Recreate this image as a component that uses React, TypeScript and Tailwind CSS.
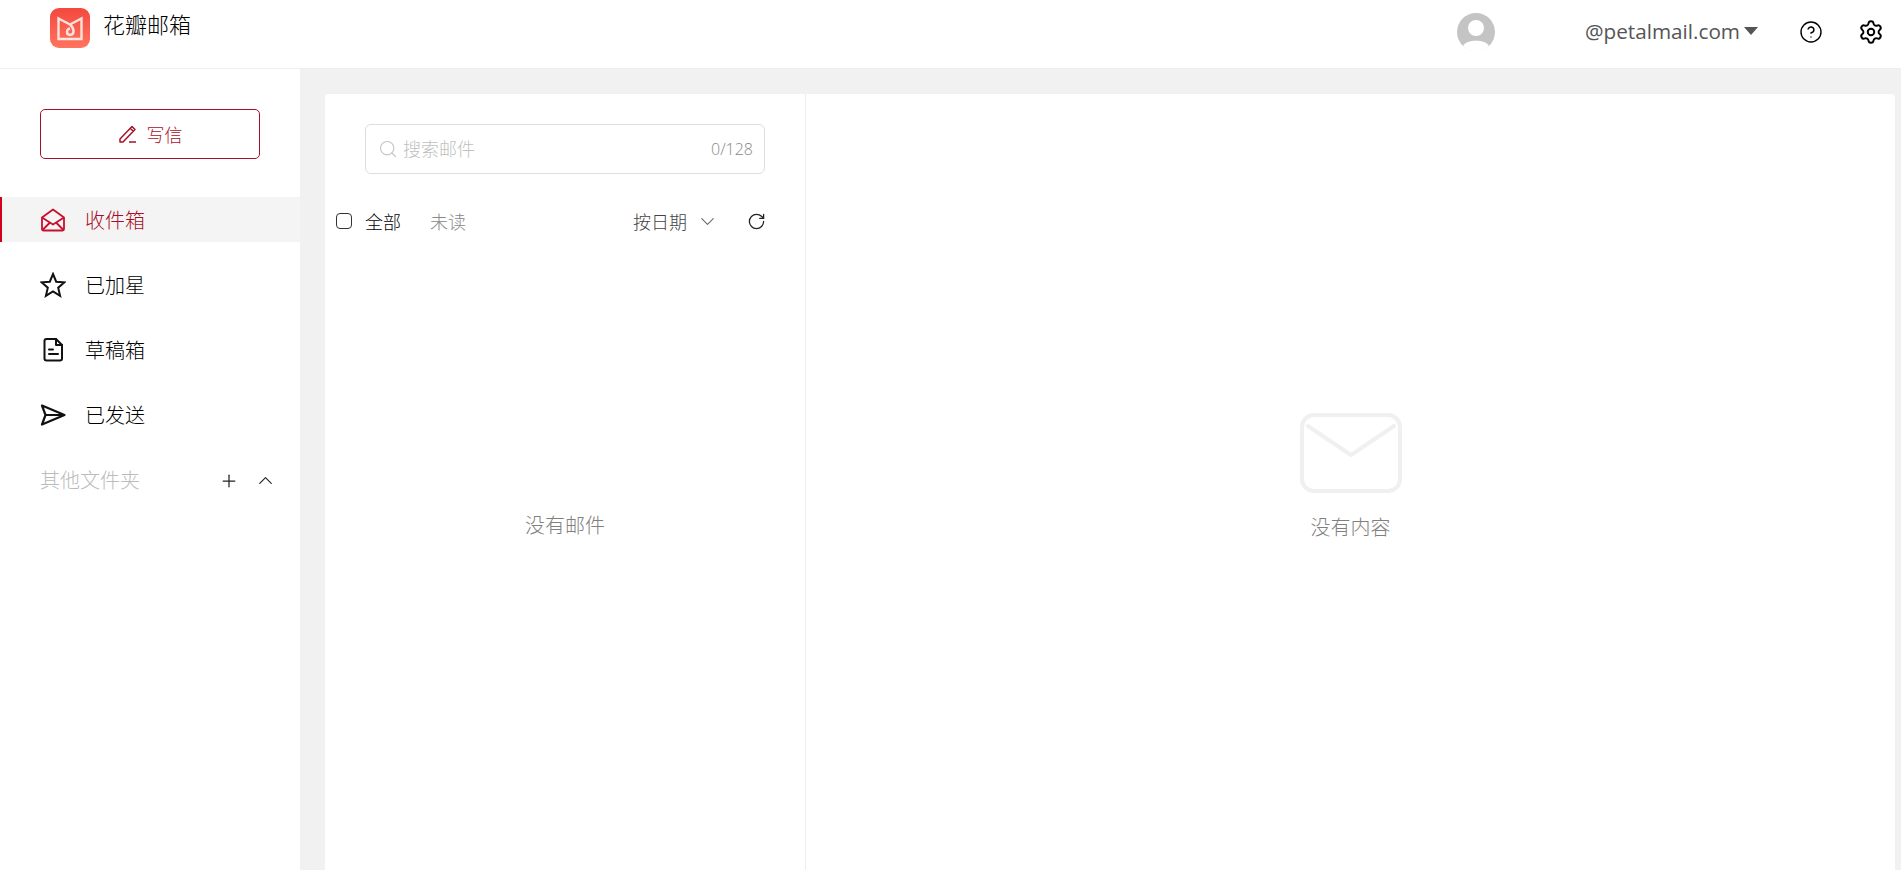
import React from 'react';
import { ChevronDown, ChevronUp, Plus, RotateCw, Search, Settings, CircleHelp } from 'lucide-react';

const font = { cjk: 'font-["Noto_Sans_CJK_SC","Liberation_Sans",sans-serif]' };

function Logo() {
  return (
    <svg width="40" height="40" viewBox="0 0 40 40" className="shrink-0">
      <defs>
        <linearGradient id="logo-bg" x1="0" y1="0" x2="0" y2="1">
          <stop offset="0" stopColor="#f4483e" />
          <stop offset="1" stopColor="#ff7460" />
        </linearGradient>
      </defs>
      <rect width="40" height="40" rx="9" fill="url(#logo-bg)" />
      <path
        d="M8.5 10.5 L20 16.5 L31.5 10.5 V31 H8.5 Z M20 16.5 C24.5 20.5 25 26.5 20 27 C15.5 26.5 16.5 21 20 20.5"
        fill="none"
        stroke="#fde3dc"
        strokeWidth="2.4"
      />
    </svg>
  );
}

function InboxIcon() {
  return (
    <svg width="26" height="26" viewBox="0 0 26 26" fill="none" stroke="#c8102e" strokeWidth="1.8" strokeLinejoin="round">
      <path d="M2 10.5 L13 2.5 L24 10.5 V22 a1.5 1.5 0 0 1 -1.5 1.5 H3.5 A1.5 1.5 0 0 1 2 22 Z" />
      <path d="M2 10.5 L13 17.5 L24 10.5 M2.5 23 L10 15.5 M23.5 23 L16 15.5" />
    </svg>
  );
}

function StarIcon() {
  return (
    <svg width="26" height="26" viewBox="0 0 26 26" fill="none" stroke="#111111" strokeWidth="2" strokeLinejoin="miter">
      <path d="M13 2 L16.2 9.7 L24.5 10.3 L18.2 15.7 L20.1 23.8 L13 19.4 L5.9 23.8 L7.8 15.7 L1.5 10.3 L9.8 9.7 Z" />
    </svg>
  );
}

function DraftIcon() {
  return (
    <svg width="26" height="26" viewBox="0 0 26 26" fill="none" stroke="#111111" strokeWidth="2" strokeLinejoin="round" strokeLinecap="round">
      <path d="M6.5 2 H16 L22 8 V21.5 a2 2 0 0 1 -2 2 H6.5 a2 2 0 0 1 -2 -2 V4 a2 2 0 0 1 2 -2 Z" />
      <path d="M16 2 V8 H22 M9 12.5 H13 M9 17 H18" />
    </svg>
  );
}

function SendIcon() {
  return (
    <svg width="26" height="26" viewBox="0 0 26 26" fill="none" stroke="#111111" strokeWidth="2.2" strokeLinejoin="round">
      <path d="M2 3.5 L24.5 13 L2 22.5 L5.5 13 Z M5.5 13 H24.5" />
    </svg>
  );
}

function PenIcon() {
  return (
    <svg width="20" height="20" viewBox="0 0 20 20" fill="none" stroke="#a80f26" strokeWidth="1.5" strokeLinejoin="round">
      <path d="M2 15 L14 2.5 L17 5.5 L5 18 H2 Z M12.3 4.3 L15.3 7.3" />
      <path d="M11 18 H18" />
    </svg>
  );
}

function Avatar() {
  return (
    <svg width="38" height="38" viewBox="0 0 38 38">
      <circle cx="19" cy="19" r="19" fill="#c4c4c4" />
      <circle cx="19" cy="15" r="8" fill="#fff" />
      <path d="M6 33 C9 26 29 26 32 33 A19 19 0 0 1 6 33 Z" fill="#fff" />
    </svg>
  );
}

function NavItem({ icon, label, active }: { icon: React.ReactNode; label: string; active?: boolean }) {
  return (
    <div
      className={`flex h-[45px] items-center gap-[19px] border-l-2 pl-[37px] ${
        active ? 'border-[#d0021b] bg-[#f4f4f4] text-[#a80f26]' : 'border-transparent text-black'
      }`}
    >
      <span className="flex h-[26px] w-[27px] items-center justify-center">{icon}</span>
      <span className="text-[20px] font-light">{label}</span>
    </div>
  );
}

export default function App() {
  return (
    <div className={`flex h-screen flex-col overflow-hidden bg-white ${font.cjk}`}>
      {/* Header */}
      <header className="flex h-[69px] shrink-0 border-b border-[#eeeeee] bg-white pl-[50px] pr-[17px]">
        <div className="flex h-[56px] items-center">
          <Logo />
          <span className="mb-[10px] ml-[13px] text-[22px] font-light leading-[30px] text-black">花瓣邮箱</span>
        </div>
        <div className="ml-auto flex h-[64px] items-center">
          <Avatar />
          <span className="mb-[2px] ml-[90px] font-['Open_Sans',sans-serif] text-[20.7px] leading-[28px] text-[#555555]">
            @petalmail.com
          </span>
          <span className="mb-[2px] ml-[4px] h-0 w-0 border-x-[7px] border-t-[8px] border-x-transparent border-t-[#555555]" />
          <CircleHelp className="ml-[41px] text-black" size={24} strokeWidth={1.4} />
          <Settings className="ml-[35px] text-black" size={26} strokeWidth={1.8} />
        </div>
      </header>

      <div className="flex min-h-0 flex-1">
        {/* Sidebar */}
        <aside className="w-[300px] shrink-0 bg-white pt-[40px]">
          <button className="mx-[40px] flex h-[50px] w-[220px] items-center justify-center gap-[9px] rounded-[5px] border border-[#a80f26] text-[18px] font-light text-[#a80f26]">
            <PenIcon />
            <span>写信</span>
          </button>
          <nav className="mt-[38px] flex flex-col gap-[20px]">
            <NavItem icon={<InboxIcon />} label="收件箱" active />
            <NavItem icon={<StarIcon />} label="已加星" />
            <NavItem icon={<DraftIcon />} label="草稿箱" />
            <NavItem icon={<SendIcon />} label="已发送" />
            <div className="flex h-[45px] items-center pl-[40px] pr-[23px]">
              <span className="text-[20px] font-light text-[#bbbbbb]">其他文件夹</span>
              <Plus className="ml-auto mt-[3px] text-[#222222]" size={20} strokeWidth={1.5} />
              <ChevronUp className="ml-[15px] mt-[1px] text-[#222222]" size={23} strokeWidth={1.2} />
            </div>
          </nav>
        </aside>

        {/* Main */}
        <main className="flex min-w-0 flex-1 bg-[#f1f1f1] pl-[25px] pr-[6px] pt-[25px]">
          <div className="flex flex-1 rounded-t-[4px] bg-white">
            {/* Mail list */}
            <section className="flex w-[481px] shrink-0 flex-col border-r border-[#eeeeee]">
              <div className="ml-[40px] mt-[30px] flex h-[50px] w-[400px] items-center rounded-[6px] border border-[#dddddd] pl-[12px] pr-[11px]">
                <Search className="text-[#c4c4c4]" size={20} strokeWidth={1.4} />
                <span className="mb-[2px] ml-[5px] text-[18px] font-light text-[#bfbfbf]">搜索邮件</span>
                <span className="ml-auto font-['Open_Sans',sans-serif] text-[16px] font-light text-[#888888]">0/128</span>
              </div>
              <div className="mt-[29px] flex h-[36px] items-center pl-[11px]">
                <span className="h-[16px] w-[16px] rounded-[4px] border-[1.5px] border-[#333333]" />
                <span className="ml-[13px] text-[18px] font-light text-black">全部</span>
                <span className="ml-[29px] text-[18px] font-light text-[#888888]">未读</span>
                <span className="ml-[167px] text-[18px] font-light text-[#444444]">按日期</span>
                <ChevronDown className="ml-[9px] text-[#666666]" size={23} strokeWidth={1.1} />
                <RotateCw className="ml-[28px] text-[#222222]" size={19} strokeWidth={1.6} />
              </div>
              <div className="pt-[272px] text-center text-[20px] font-light leading-[28px] text-[#808080]">没有邮件</div>
            </section>

            {/* Reading pane */}
            <section className="flex flex-1 flex-col items-center pt-[319px]">
              <svg width="102" height="80" viewBox="0 0 102 80" fill="none" stroke="#f0f0f0" strokeWidth="4" strokeLinecap="round" strokeLinejoin="round">
                <rect x="2" y="2" width="98" height="76" rx="12" />
                <path d="M8 13 L51 42 L94 13" />
              </svg>
              <div className="mt-[20px] text-[20px] font-light leading-[28px] text-[#808080]">没有内容</div>
            </section>
          </div>
        </main>
      </div>
    </div>
  );
}
